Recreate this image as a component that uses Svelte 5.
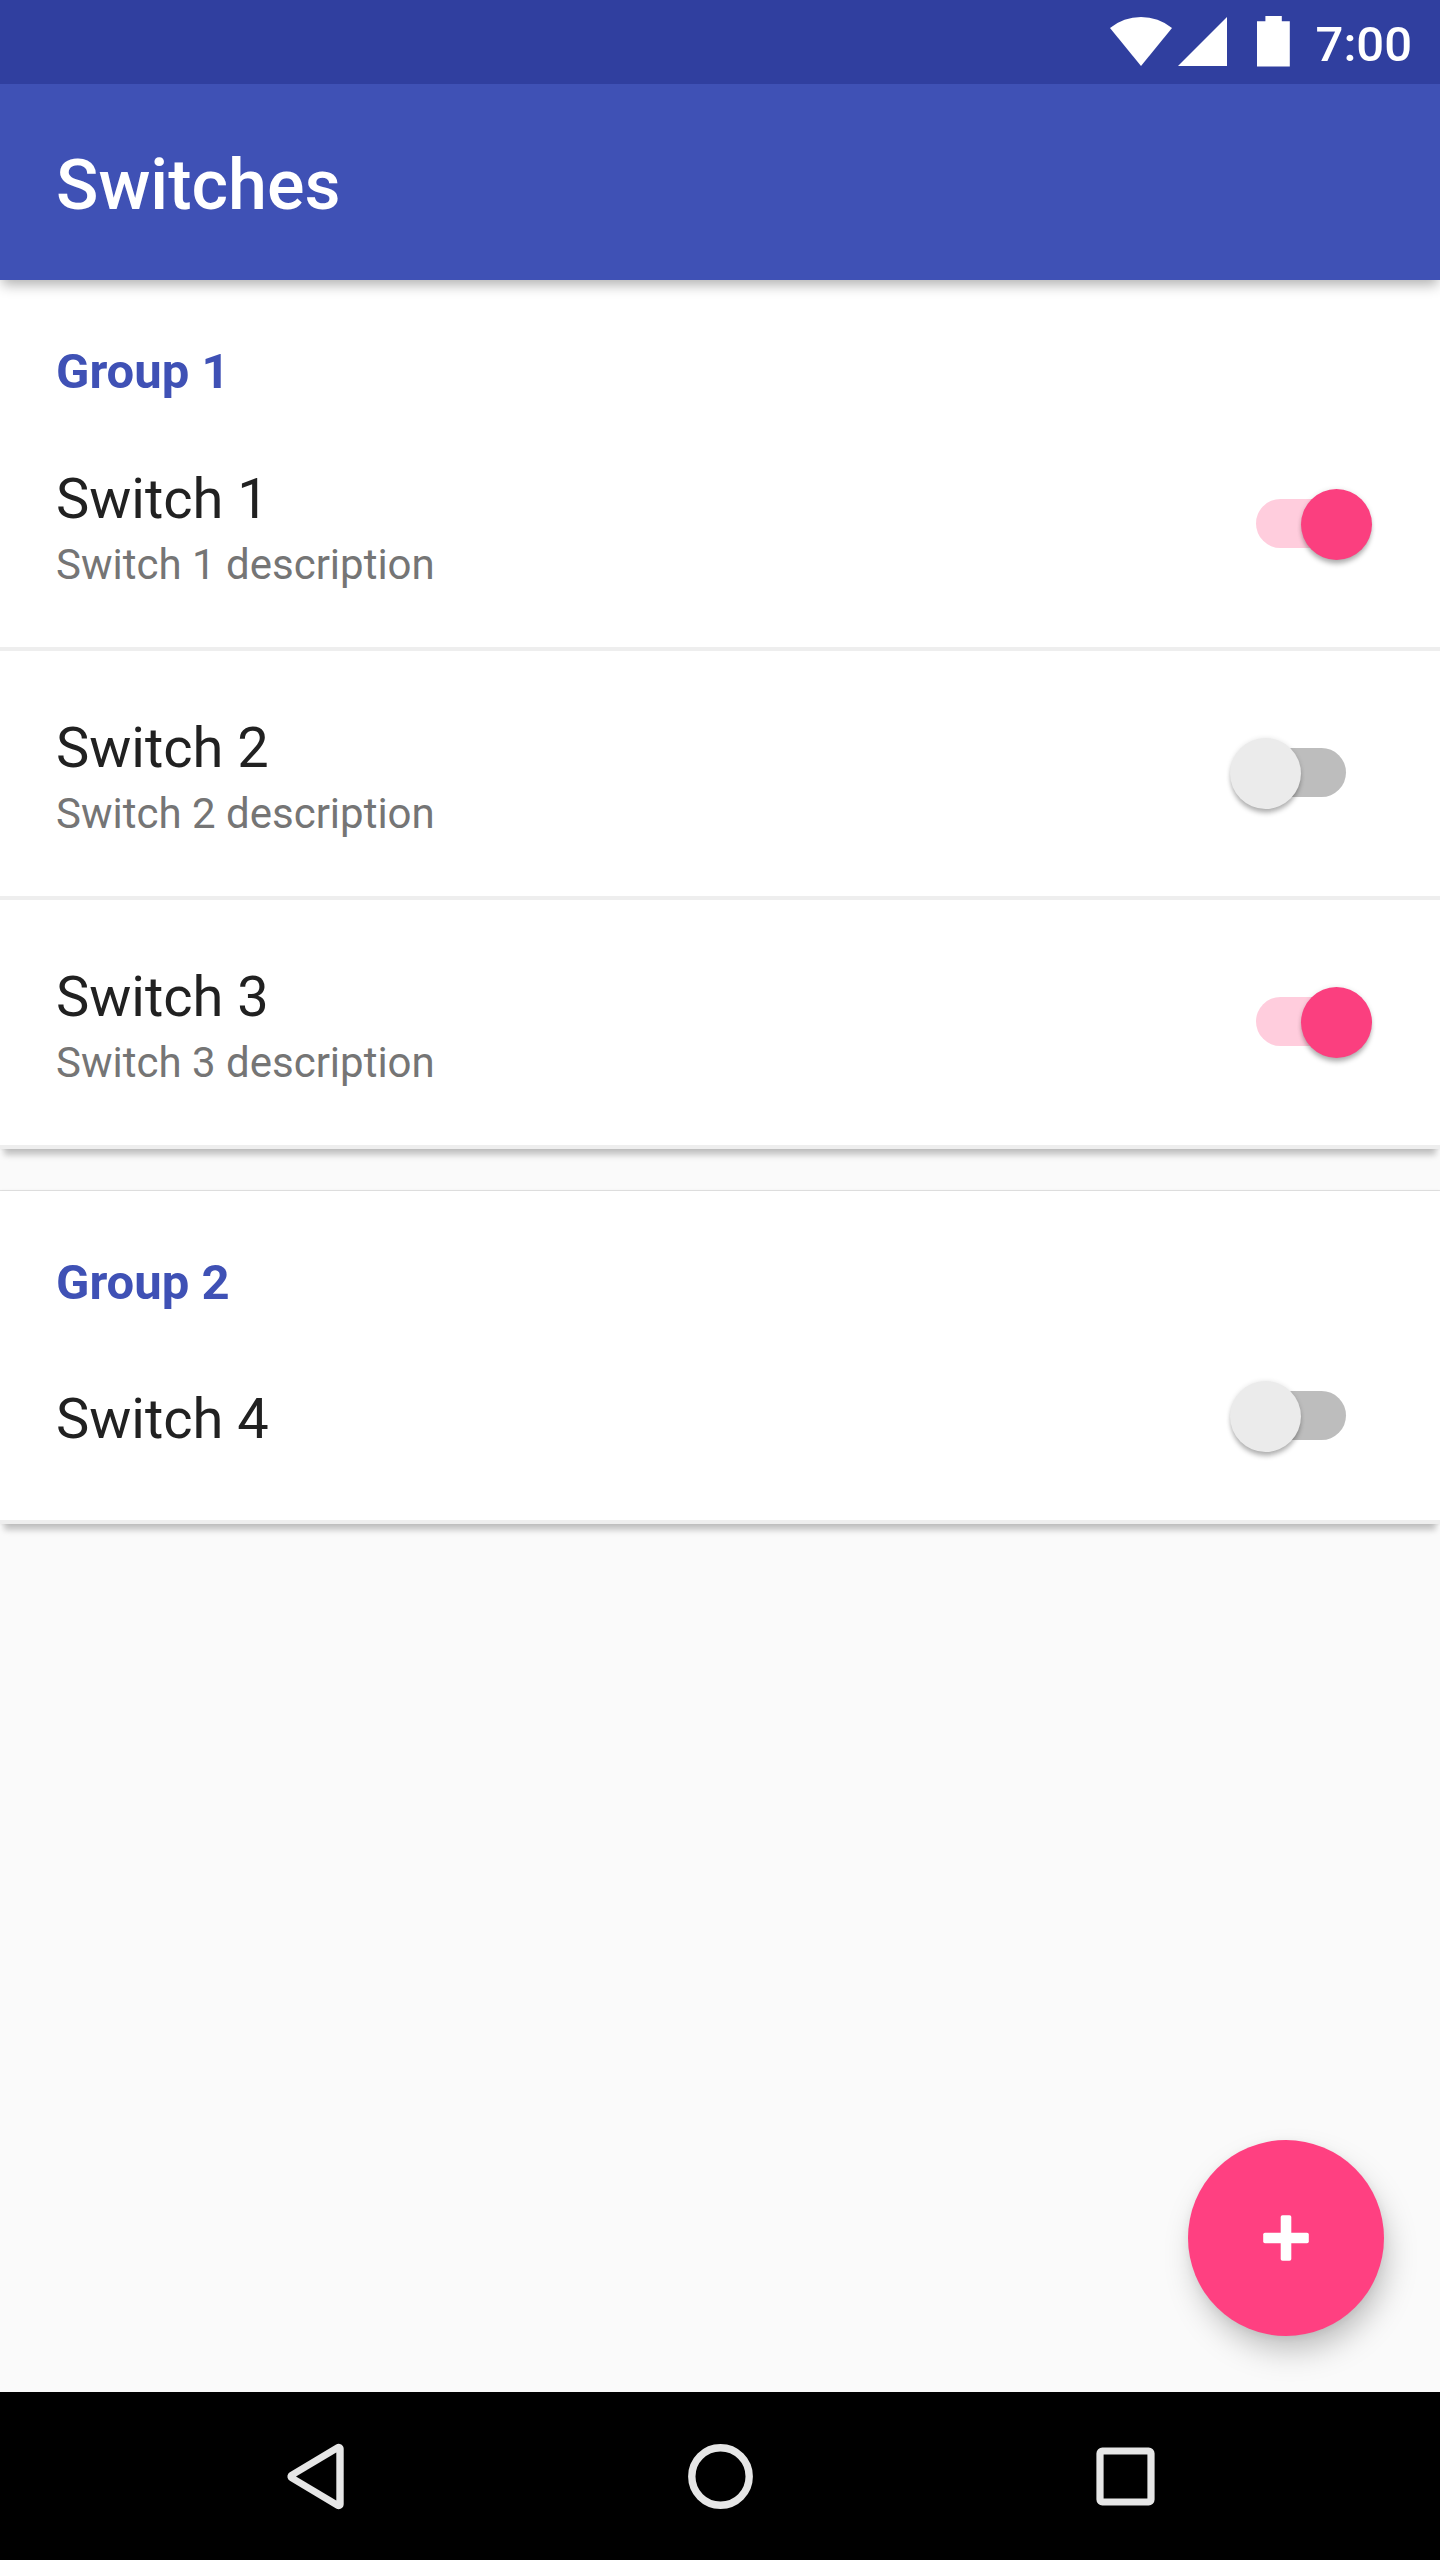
<script>
  let groups = $state([
    {
      title: 'Group 1',
      items: [
        { label: 'Switch 1', description: 'Switch 1 description', on: true },
        { label: 'Switch 2', description: 'Switch 2 description', on: false },
        { label: 'Switch 3', description: 'Switch 3 description', on: true }
      ]
    },
    { title: 'Group 2', items: [{ label: 'Switch 4', description: '', on: false }] }
  ]);
</script>

<div class="screen">
  <header class="top">
    <div class="status">
      <svg class="status-icons" width="190" height="84" viewBox="1106 0 190 84" fill="#fff" aria-hidden="true">
        <path d="M1141 66 1110 28A49 49 0 0 1 1172 28Z" />
        <path d="M1178 66H1227V17Z" />
        <path d="M1257 21.3H1265.4V16H1281.8V21.3H1289.8V66.6H1257Z" />
      </svg>
      <span class="clock">7:00</span>
    </div>
    <div class="toolbar"><h1>Switches</h1></div>
  </header>

  <main>
    {#each groups as group}
      <section class="card">
        <h2>{group.title}</h2>
        {#each group.items as item}
          <div class="row" class:single={!item.description}>
            <div class="texts">
              <span class="label">{item.label}</span>
              {#if item.description}<span class="description">{item.description}</span>{/if}
            </div>
            <button
              class="switch"
              class:on={item.on}
              role="switch"
              aria-checked={item.on}
              aria-label={item.label}
              onclick={() => (item.on = !item.on)}
            >
              <span class="track"></span>
              <span class="thumb"></span>
            </button>
          </div>
        {/each}
      </section>
    {/each}

    <button class="fab" aria-label="Add">
      <svg width="46" height="46" viewBox="0 0 46 46" fill="#fff">
        <rect x="0.2" y="17.7" width="45.6" height="10.6" rx="1.8" />
        <rect x="17.7" y="0.2" width="10.6" height="45.6" rx="1.8" />
      </svg>
    </button>
  </main>

  <nav>
    <svg width="1440" height="168" viewBox="0 2392 1440 168" aria-hidden="true">
      <path
        d="M338.7 2448.8V2504.2L292.4 2476.5Z"
        fill="#e6e6e6"
        stroke="#e6e6e6"
        stroke-width="10"
        stroke-linejoin="round"
      />
      <path d="M336.3 2452.6V2500.4L296 2476.5Z" fill="#000" />
      <circle cx="720.5" cy="2476.5" r="28.7" fill="none" stroke="#e6e6e6" stroke-width="7.4" />
      <path
        fill="#e6e6e6"
        fill-rule="evenodd"
        d="M1102.4 2447.4H1148.6A6 6 0 0 1 1154.6 2453.4V2499.6A6 6 0 0 1 1148.6 2505.6H1102.4A6 6 0 0 1 1096.4 2499.6V2453.4A6 6 0 0 1 1102.4 2447.4ZM1103.6 2454.6V2498.4H1147.4V2454.6Z"
      />
    </svg>
  </nav>
</div>

<style>
  :global(body) {
    margin: 0;
  }
  .screen {
    width: 1440px;
    height: 2560px;
    display: flex;
    flex-direction: column;
    overflow: hidden;
    background: #fafafa;
    font-family: Roboto, sans-serif;
  }
  .top {
    position: relative;
    z-index: 1;
    box-shadow: 0 7px 12px -2px rgba(0, 0, 0, 0.3);
  }
  .status {
    height: 84px;
    display: flex;
    justify-content: flex-end;
    box-sizing: border-box;
    padding-right: 28px;
    gap: 20px;
    background: #303f9f;
  }
  .status-icons {
    display: block;
  }
  .clock {
    font-size: 49px;
    font-weight: 500;
    line-height: 89px;
    color: #fff;
  }
  .toolbar {
    height: 196px;
    box-sizing: border-box;
    padding: 60px 56px 0;
    background: #3f51b5;
  }
  h1 {
    margin: 0;
    font-size: 70px;
    font-weight: 500;
    line-height: 82px;
    color: #fff;
  }
  main {
    flex: 1;
    position: relative;
    display: flex;
    flex-direction: column;
    gap: 42px;
  }
  .card {
    background: #fff;
    box-shadow:
      0 10px 6px -4px rgba(0, 0, 0, 0.22),
      0 -1px 0 rgba(0, 0, 0, 0.09),
      0 0 3px rgba(0, 0, 0, 0.08);
  }
  h2 {
    height: 122px;
    box-sizing: border-box;
    margin: 0;
    padding: 63px 56px 0;
    font-size: 49px;
    font-weight: 700;
    line-height: 58px;
    color: #3f51b5;
  }
  .row {
    height: 249px;
    box-sizing: border-box;
    display: flex;
    justify-content: space-between;
    align-items: center;
    padding: 0 68px 0 56px;
    border-bottom: 4px solid #eee;
  }
  .row.single {
    height: 211px;
  }
  .texts {
    display: flex;
    flex-direction: column;
    gap: 8px;
    padding-top: 6px;
  }
  .single .texts {
    padding-top: 5px;
  }
  .label {
    font-size: 56px;
    line-height: 66px;
    color: #212121;
  }
  .description {
    font-size: 42px;
    line-height: 49px;
    color: #757575;
  }
  .switch {
    width: 142px;
    height: 71px;
    display: grid;
    align-items: center;
    padding: 0;
    border: 0;
    background: none;
  }
  .track,
  .thumb {
    grid-area: 1 / 1;
  }
  .track {
    justify-self: center;
    width: 90px;
    height: 49px;
    margin-bottom: 2px;
    border-radius: 25px;
    background: #bdbdbd;
  }
  .thumb {
    width: 71px;
    height: 71px;
    border-radius: 50%;
    background: #ebebeb;
    box-shadow:
      0 5px 5px -1px rgba(0, 0, 0, 0.28),
      0 0 5px rgba(0, 0, 0, 0.1);
  }
  .on .track {
    background: #ffcddd;
  }
  .on .thumb {
    justify-self: end;
    background: #fb3f7f;
  }
  .fab {
    position: absolute;
    right: 56px;
    bottom: 56px;
    width: 196px;
    height: 196px;
    display: flex;
    align-items: center;
    justify-content: center;
    padding: 0;
    border: 0;
    border-radius: 50%;
    background: #ff4081;
    box-shadow:
      5px 17px 32px -4px rgba(0, 0, 0, 0.26),
      0 2px 10px rgba(0, 0, 0, 0.06);
  }
  nav {
    position: relative;
    height: 168px;
    background: #000;
  }
  nav svg {
    display: block;
  }
</style>
